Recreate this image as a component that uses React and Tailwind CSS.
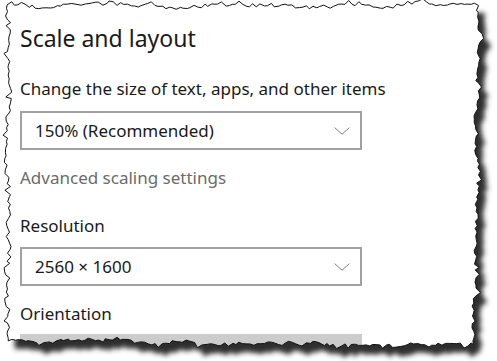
import React from "react";

function rng(seed) {
  let s = seed;
  return () => {
    s = (s * 16807) % 2147483647;
    return (s - 1) / 2147483646;
  };
}

function buildTorn() {
  const r = rng(12345);
  const pts = [];
  const TL = [8, 5], TR = [478, 6], BR = [474, 345], BL = [8, 341];
  const edge = (a, b, horizontal, amp, outward) => {
    const len = Math.hypot(b[0] - a[0], b[1] - a[1]);
    const n = Math.floor(len / 3.5);
    let drift = 0;
    for (let i = 0; i < n; i++) {
      const t = i / n;
      let x = a[0] + (b[0] - a[0]) * t;
      let y = a[1] + (b[1] - a[1]) * t;
      drift = drift * 0.8 + (r() - 0.5) * amp * 0.9;
      const j = drift + (r() - 0.5) * amp + (r() < 0.12 ? outward * amp : 0);
      if (horizontal) { y += j; x += (r() - 0.5) * 2; } else { x += j; y += (r() - 0.5) * 2; }
      pts.push([x, y]);
    }
  };
  edge(TL, TR, true, 2.8, -1);
  edge(TR, BR, false, 2.8, 1);
  edge(BR, BL, true, 2.8, 1);
  edge(BL, TL, false, 3, -1);
  return "M" + pts.map((p) => p[0].toFixed(1) + " " + p[1].toFixed(1)).join("L") + "Z";
}

const torn = buildTorn();
const outside = `M0 0H497V361H0Z${torn}`;

function Chevron() {
  return (
    <svg width="16" height="8" viewBox="0 0 16 8" className="shrink-0">
      <path d="M0.6 0.6L8 7.2L15.4 0.6" fill="none" stroke="#7d7d7d" strokeWidth="1" />
    </svg>
  );
}

function Dropdown({ value }) {
  return (
    <div className="flex h-[39px] w-[342px] items-center justify-between border-2 border-[#a0a0a0] bg-white pl-[13px] pr-[10px]">
      <span className="text-[17px] leading-[22px] text-[#1a1a1a]">{value}</span>
      <Chevron />
    </div>
  );
}

export default function App() {
  return (
    <div
      className="relative h-[361px] w-[497px] overflow-hidden bg-white"
      style={{ fontFamily: '"Noto Sans", "Open Sans", sans-serif' }}
    >
      <div className="flex flex-col pl-[20px] pt-[24px]">
        <h1 className="text-[23px] leading-[28px] text-[#1a1a1a]">Scale and layout</h1>
        <p className="mt-[26px] text-[17px] leading-[22px] text-[#1a1a1a]">
          Change the size of text, apps, and other items
        </p>
        <div className="mt-[11px]">
          <Dropdown value="150% (Recommended)" />
        </div>
        <p className="mt-[17px] text-[17px] leading-[22px] text-[#6b6b6b]">Advanced scaling settings</p>
        <p className="mt-[26px] text-[17px] leading-[22px] text-[#1a1a1a]">Resolution</p>
        <div className="mt-[10px]">
          <Dropdown value="2560 × 1600" />
        </div>
        <p className="mt-[17px] text-[17px] leading-[22px] text-[#1a1a1a]">Orientation</p>
        <div className="mt-[9px] h-[39px] w-[342px] bg-[#cccccc]" />
      </div>

      <svg className="pointer-events-none absolute inset-0" width="497" height="361" viewBox="0 0 497 361">
        <defs>
          <filter id="tornBlur" x="-10%" y="-10%" width="120%" height="120%">
            <feGaussianBlur stdDeviation="2.8" />
          </filter>
          <clipPath id="tornOutside">
            <path d={outside} clipRule="evenodd" />
          </clipPath>
        </defs>
        <path d={outside} fill="#ffffff" fillRule="evenodd" />
        <g clipPath="url(#tornOutside)">
          <path d={torn} transform="translate(7 9)" fill="#2e2e2e" filter="url(#tornBlur)" />
        </g>
        <path d={torn} fill="none" stroke="#111111" strokeWidth="1" strokeLinejoin="round" />
      </svg>
    </div>
  );
}
